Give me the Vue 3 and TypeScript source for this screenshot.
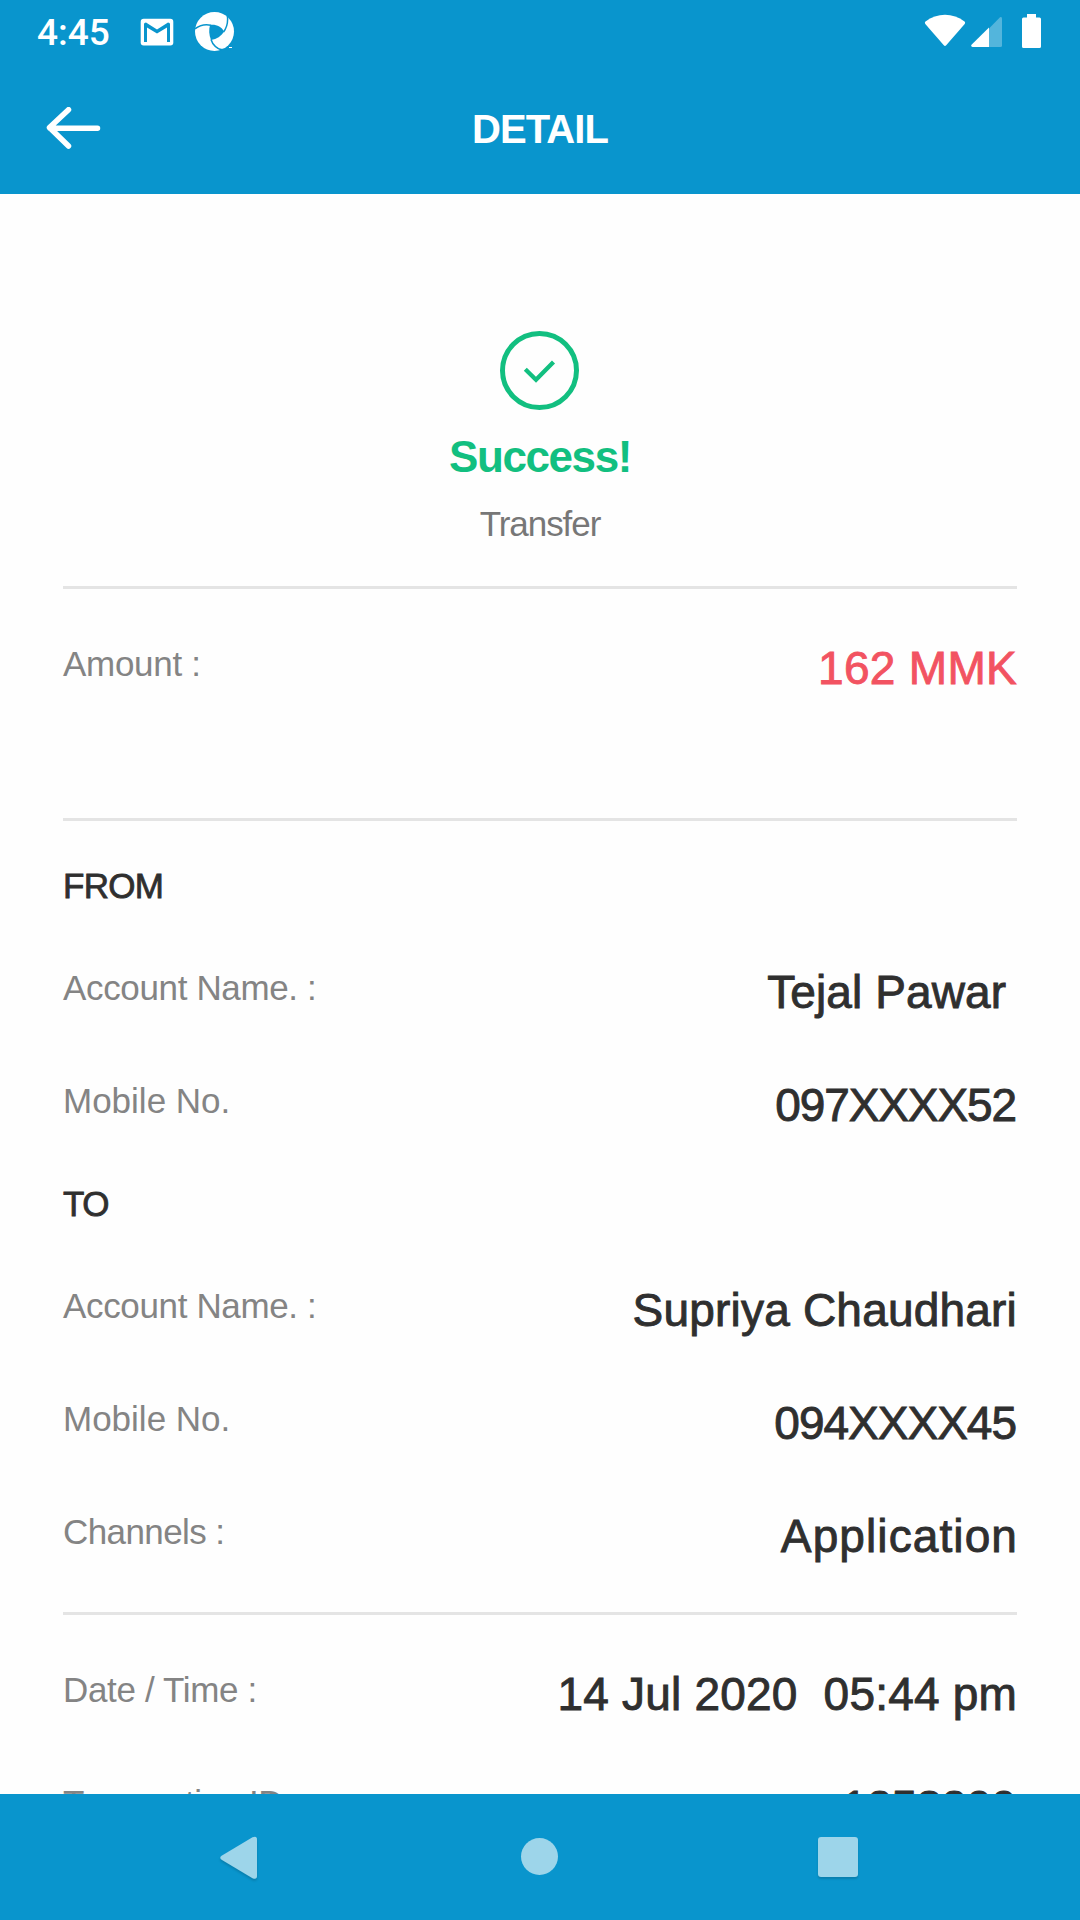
<script setup lang="ts">
interface Row {
  label: string
  value: string
  labelTracking: number
  tracking: number
  inset?: number
}

const from: Row[] = [
  { label: 'Account Name. :', value: 'Tejal Pawar ', labelTracking: -0.35, tracking: 0.1, inset: -2 },
  { label: 'Mobile No.', value: '097XXXX52', labelTracking: 0, tracking: -1.1, inset: 1 },
]
const to: Row[] = [
  { label: 'Account Name. :', value: 'Supriya Chaudhari', labelTracking: -0.35, tracking: 0.2 },
  { label: 'Mobile No.', value: '094XXXX45', labelTracking: 0, tracking: -1, inset: 1 },
  { label: 'Channels :', value: 'Application', labelTracking: -0.6, tracking: 1.1, inset: -1 },
]
const meta: Row[] = [
  { label: 'Date / Time :', value: '14 Jul 2020  05:44 pm', labelTracking: -0.35, tracking: 0.2 },
  { label: 'Transaction ID', value: '1258200', labelTracking: -0.45, tracking: -0.7, inset: 1 },
]
const sections = [
  { key: 'from', title: 'FROM', tracking: -0.7, rows: from },
  { key: 'to', title: 'TO', tracking: -1.5, rows: to },
]

const px = (n = 0) => `${n}px`
</script>

<template>
  <div class="screen">
    <header class="top">
      <div class="status">
        <span class="time">4:45</span>
        <svg class="mail" width="34" height="28" viewBox="0 0 34 28">
          <rect x=".7" y=".8" width="32.600" height="26.600" rx="3" fill="#fff" />
          <path d="M4 24V6Q4 4.500 6 4.500L17 11.500L28 4.500Q30 4.500 30 6V24H27V9.500L17 15.500L7 9.500V24Z" fill="#0995cd" />
        </svg>
        <svg class="swirl" width="40" height="40" viewBox="0 0 40 40">
          <circle cx="19.500" cy="19.500" r="19.500" fill="#fff" />
          <path d="M15 13C21 12.200 26.500 14.500 29 19.700C26 24.200 22 27 16 28C14 23 13.700 18 15 13Z" fill="#0995cd" />
          <path d="M0 16.800C5 13 10 12 16 13.300M32.300 3C33.300 10 32 15.500 28.500 20M28 38.800C21.500 36.500 17.500 32.500 16 27.500" fill="none" stroke="#0995cd" stroke-width="1.500" />
          <path d="M24.500 36.500Q30 37.500 35.500 34.500L35 39H26.500Z" fill="#0995cd" />
          <path d="M34 35.500H37" stroke="#fff" stroke-width="1" />
        </svg>
        <div class="indicators">
          <svg width="42" height="34" viewBox="0 0 42 34">
            <path d="M1.500 7.600C13 -1.400 29 -1.400 40.500 7.600Q41.600 8.600 40.700 9.900L22.200 31.300Q21 32.600 19.800 31.300L1.300 9.900Q.4 8.600 1.500 7.600Z" fill="#fff" />
          </svg>
          <svg class="signal" width="32" height="32" viewBox="0 0 32 32">
            <path d="M18 12.500L29 1.200Q31 .2 31 2.500V29.500Q31 31 29.500 31H18Z" fill="#fff" fill-opacity=".3" />
            <path d="M18 11.500V31H1.500Q-.5 30.500 .5 28.800Z" fill="#fff" />
          </svg>
          <svg class="battery" width="20" height="34" viewBox="0 0 20 34">
            <path d="M5 0H14V3.500H17.500Q19 3.500 19 5V32.500Q19 34 17.500 34H1.500Q0 34 0 32.500V5Q0 3.500 1.500 3.500H5Z" fill="#fff" />
          </svg>
        </div>
      </div>
      <div class="bar">
        <svg class="back" width="56" height="42" viewBox="0 0 56 42">
          <path d="M22.500 2.700L3.500 20.500L22.500 39M4 21.300H51.500" fill="none" stroke="#fff" stroke-width="5.500" stroke-linecap="round" stroke-linejoin="round" />
        </svg>
        <h1>DETAIL</h1>
      </div>
    </header>

    <main>
      <div class="result">
        <svg width="80" height="80" viewBox="0 0 80 80">
          <circle cx="39.500" cy="40.500" r="37" fill="none" stroke="#12bf80" stroke-width="5" />
          <path d="M25.300 39.300L36 49.700L53.500 32" fill="none" stroke="#12bf80" stroke-width="4.300" />
        </svg>
        <strong>Success!</strong>
        <span>Transfer</span>
      </div>
      <section class="ruled amount">
        <div class="row">
          <span class="label">Amount :</span>
          <span class="value red">162 MMK</span>
        </div>
      </section>
      <div class="parties">
        <section v-for="s in sections" :key="s.key" class="party">
          <h2 :style="{ letterSpacing: px(s.tracking) }">{{ s.title }}</h2>
          <div class="rows">
            <div v-for="r in s.rows" :key="r.label" class="row">
              <span class="label" :style="{ letterSpacing: px(r.labelTracking) }">{{ r.label }}</span>
              <span class="value" :style="{ letterSpacing: px(r.tracking), marginRight: px(r.inset) }">{{ r.value }}</span>
            </div>
          </div>
        </section>
      </div>
      <section class="ruled rows">
        <div v-for="r in meta" :key="r.label" class="row">
          <span class="label" :style="{ letterSpacing: px(r.labelTracking) }">{{ r.label }}</span>
          <span class="value" :style="{ letterSpacing: px(r.tracking), marginRight: px(r.inset) }">{{ r.value }}</span>
        </div>
      </section>
    </main>

    <nav>
      <svg width="44" height="50" viewBox="0 0 44 50">
        <path d="M3 20.500L33.500 2.300Q38 .5 38 4.500V41Q38 45 33.500 43.200L3 25Q-.5 22.700 3 20.500Z" fill="#9dd5ea" />
      </svg>
      <i class="home"></i>
      <i class="recent"></i>
    </nav>
  </div>
</template>

<style>
body {
  margin: 0;
  background: #fefefe;
}
</style>

<style scoped>
.screen {
  width: 1080px;
  height: 1920px;
  display: flex;
  flex-direction: column;
  overflow: hidden;
  background: #fefefe;
  font-family: "Liberation Sans", Arial, sans-serif;
}
.top {
  flex: none;
  height: 194px;
  background: #0995cd;
  color: #fff;
}
.status {
  height: 66px;
  display: flex;
  align-items: center;
  padding: 0 38px 0 37px;
}
.time {
  width: 103px;
  font: 500 37px/66px Roboto, sans-serif;
}
.mail {
  margin-top: -3px;
}
.swirl {
  margin: -2px 0 0 21px;
}
.indicators {
  margin-left: auto;
  display: flex;
  height: 34px;
  margin-top: -4px;
}
.signal {
  margin: 2px 0 0 5px;
}
.battery {
  margin-left: 19px;
}
.bar {
  height: 126px;
  display: grid;
  grid-template-columns: 56px 1fr 56px;
  align-items: center;
  padding: 0 46px;
}
.back {
  margin-top: -2px;
}
h1 {
  margin: 0;
  text-align: center;
  font-size: 40px;
  line-height: 46px;
  letter-spacing: -0.9px;
}
main {
  flex: 1;
  min-height: 0;
  overflow: hidden;
  padding: 136px 63px 0;
}
.result {
  height: 256px;
  display: flex;
  flex-direction: column;
  align-items: center;
}
.result strong {
  margin-top: 22px;
  font-size: 44px;
  line-height: 50px;
  letter-spacing: -1.4px;
  color: #12bf80;
}
.result span {
  margin-top: 19px;
  font-size: 35px;
  line-height: 46px;
  letter-spacing: -1.05px;
  color: #777;
}
.ruled {
  border-top: 3px solid #e4e4e4;
  padding-top: 52px;
}
.amount {
  height: 177px;
}
.amount .label {
  letter-spacing: -0.3px;
}
.row {
  display: flex;
  justify-content: space-between;
  height: 54px;
}
.rows {
  display: flex;
  flex-direction: column;
  gap: 59px;
}
.label {
  font-size: 35px;
  line-height: 46px;
  color: #848484;
}
.value {
  font-size: 46px;
  line-height: 54px;
  color: #2f2f2f;
  white-space: pre;
  -webkit-text-stroke: 0.9px currentColor;
}
.red {
  color: #f25361;
  letter-spacing: 0.3px;
}
.parties {
  border-top: 3px solid #e4e4e4;
  padding-top: 42px;
}
.party {
  padding-bottom: 49px;
}
h2 {
  margin: 0 0 56px;
  font-size: 35px;
  line-height: 46px;
  font-weight: 400;
  color: #2f2f2f;
  -webkit-text-stroke: 0.8px currentColor;
}
nav {
  flex: none;
  height: 126px;
  display: flex;
  background: #0995cd;
}
nav svg {
  margin: 41px 0 0 219px;
  filter: drop-shadow(0 2px 1px rgba(0, 0, 0, 0.15));
}
.home {
  width: 37px;
  height: 37px;
  margin: 44px 0 0 258px;
  border-radius: 50%;
  background: #9dd5ea;
}
.recent {
  width: 40px;
  height: 40px;
  margin: 43px 0 0 260px;
  border-radius: 3px;
  background: #9dd5ea;
  box-shadow: 0 2px 2px rgba(0, 0, 0, 0.15);
}
</style>
